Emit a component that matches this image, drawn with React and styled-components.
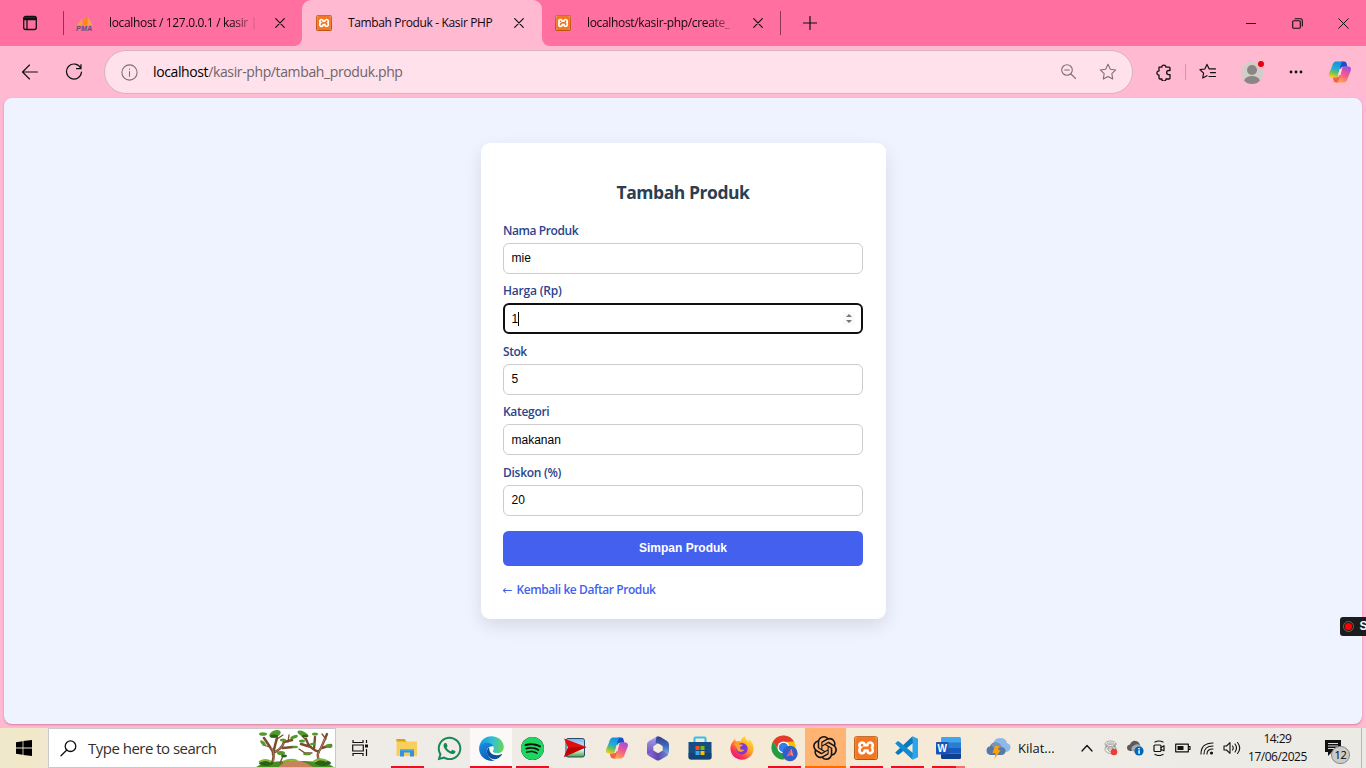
import React from "react";
import styled, { createGlobalStyle, css } from "styled-components";
import { SiOpenai, SiXampp, SiSpotify } from "react-icons/si";
import { FaWhatsapp } from "react-icons/fa";

const ui = `"Open Sans", "Noto Sans", sans-serif`;
const arial = `"Liberation Sans", Arial, sans-serif`;

const Global = createGlobalStyle`
  * { box-sizing: border-box; }
  body { margin: 0; font-family: ${ui}; overflow: hidden; }
  svg { display: block; flex: none; }
`;

const Screen = styled.div`
  position: relative;
  width: 1366px;
  height: 768px;
  display: flex;
  flex-direction: column;
  overflow: hidden;
  background: #ffb9d0;
`;

/* ---------- tab strip ---------- */
const pinkDark = "#ff6fa0";
const pinkLight = "#ffb9d0";

const TabStrip = styled.div`
  display: flex;
  height: 46px;
  flex: none;
`;
const StripLeft = styled.div`
  width: 302px;
  display: flex;
  align-items: center;
  background: ${pinkDark};
  border-bottom-right-radius: 8px;
`;
const StripRight = styled.div`
  flex: 1;
  display: flex;
  align-items: center;
  background: ${pinkDark};
  border-bottom-left-radius: 8px;
`;
const ActiveWrap = styled.div`
  width: 240px;
  background: linear-gradient(${pinkDark} 50%, ${pinkLight} 50%);
`;
const Tab = styled.div`
  display: flex;
  align-items: center;
  width: 238px;
  height: 46px;
  padding-left: ${(p) => p.$pad}px;
  ${(p) =>
    p.$active &&
    css`
      width: 240px;
      background: ${pinkLight};
      border-radius: 9px 9px 0 0;
    `}
`;
const TabTitle = styled.div`
  width: 146px;
  margin: 0 ${(p) => p.$gap || 20}px 0 ${(p) => p.$left || 16}px;
  white-space: nowrap;
  font-size: 12px;
  line-height: 20px;
  letter-spacing: ${(p) => p.$ls}px;
  color: #16060b;
  ${(p) =>
    p.$fade &&
    css`
      mask-image: linear-gradient(90deg, #000 84%, rgba(0, 0, 0, 0.15) 100%);
    `}
`;
const Divider = styled.div`
  width: 1px;
  height: ${(p) => p.$h}px;
  background: ${(p) => p.$color};
  flex: none;
`;
const WorkspaceButton = styled.div`
  width: 63px;
  padding-left: 22px;
`;
const NewTab = styled.div`
  width: 58px;
  display: flex;
  justify-content: center;
`;
const WindowButtons = styled.div`
  margin-left: auto;
  display: flex;
`;
const WindowButton = styled.div`
  width: 46px;
  height: 46px;
  display: flex;
  align-items: center;
  justify-content: center;
`;

/* ---------- toolbar ---------- */
const Toolbar = styled.div`
  display: flex;
  align-items: center;
  height: 52px;
  flex: none;
  background: ${pinkLight};
`;
const ToolButton = styled.div`
  width: ${(p) => p.$w || 44}px;
  padding-left: ${(p) => p.$shift || 0}px;
  display: flex;
  justify-content: center;
  align-items: center;
`;
const AddressBar = styled.div`
  width: 1029px;
  height: 44px;
  margin-left: 16px;
  display: flex;
  align-items: center;
  padding: 0 15px 0 16px;
  border: 1px solid #d8b4c0;
  border-radius: 22px;
  background: #ffe1eb;
`;
const Url = styled.div`
  flex: 1;
  margin-left: 15px;
  font-size: 14px;
  line-height: 20px;
  letter-spacing: -0.38px;
  color: #6f6468;
  b { font-weight: 400; color: #000; }
`;
const AddressIcons = styled.div`
  display: flex;
  gap: 22px;
`;

/* ---------- page ---------- */
const Page = styled.main`
  height: 626px;
  flex: none;
  margin: 0 4px 4px;
  padding-top: 45px;
  border-radius: 8px;
  background: #eff3ff;
  box-shadow: 0 1px 2px rgba(150, 60, 100, 0.45);
`;
const Card = styled.section`
  width: 405px;
  height: 476px;
  margin: 0 auto;
  padding: 0 23px 0 22px;
  border-radius: 9px;
  background: #fff;
  box-shadow: 0 7px 18px rgba(0, 0, 0, 0.1);
`;
const Title = styled.h2`
  margin: 0;
  padding: 36px 0 0 1px;
  height: 78.6px;
  font-size: 17.5px;
  line-height: 26px;
  letter-spacing: -0.45px;
  font-weight: 700;
  text-align: center;
  color: #2c3e50;
`;
const Field = styled.div`
  height: 60.5px;
`;
const Label = styled.div`
  height: 21px;
  padding: 0.4px 0 0 0.5px;
  font-size: 12px;
  line-height: 18px;
  letter-spacing: ${(p) => p.$ls}px;
  font-weight: 600;
  color: #2b448c;
`;
const InputBox = styled.div`
  display: flex;
  align-items: center;
  height: 31px;
  padding: 0 ${(p) => (p.$focus ? 6 : 8)}px 0 ${(p) => (p.$focus ? 7 : 8)}px;
  border: ${(p) => (p.$focus ? "2px solid #101010" : "1px solid #ccc")};
  border-radius: 6px;
  background: #fff;
  font-family: ${arial};
  font-size: 12px;
  line-height: 14px;
  color: #000;
`;
const Caret = styled.span`
  width: 1px;
  height: 14px;
  background: #000;
`;
const Spinner = styled.span`
  margin-left: auto;
  width: 12px;
  height: 13px;
  background: #fafafa;
`;
const Submit = styled.div`
  margin-top: 6.5px;
  height: 35px;
  padding-left: 1px;
  border-radius: 5.5px;
  background: #4361ee;
  color: #fff;
  font: 700 12px/34px ${arial};
  text-align: center;
`;
const BackLink = styled.div`
  display: flex;
  margin-top: 14px;
  font-size: 12px;
  line-height: 20px;
  font-weight: 600;
  letter-spacing: -0.42px;
  color: #4361ee;
`;
const Arrow = styled.span`
  width: 14px;
  font-family: "DejaVu Sans", sans-serif;
  font-weight: 400;
  font-size: 12px;
`;
const RecorderBadge = styled.div`
  position: absolute;
  left: 1340px;
  top: 617px;
  width: 26px;
  height: 19px;
  display: flex;
  align-items: center;
  gap: 5.5px;
  padding-left: 3px;
  border-radius: 3px 0 0 3px;
  background: #1c1c1c;
  color: #fff;
  font: 700 12px/19px ${arial};
  overflow: hidden;
`;

/* ---------- taskbar ---------- */
const Taskbar = styled.footer`
  display: flex;
  align-items: stretch;
  height: 40px;
  flex: none;
  background: linear-gradient(90deg, #efe9cc 0, #f2e8c8 30px, #efe9d8 60px, #efebe7 340px, #efebe6 560px, #f5ead7 680px, #f6ead6 950px, #efece5 1050px, #ebeae5 100%);
  > * { flex: none; }
`;
const Start = styled.div`
  width: 48px;
  display: flex;
  align-items: center;
  justify-content: center;
`;
const Search = styled.div`
  width: 288px;
  display: flex;
  align-items: center;
  padding-left: 11px;
  border: 1px solid #c9c9cb;
  background: #fff;
  overflow: hidden;
`;
const SearchText = styled.div`
  width: 128px;
  margin: 0 39px 0 11px;
  font-size: 15px;
  line-height: 20px;
  letter-spacing: -0.51px;
  white-space: nowrap;
  color: #303030;
`;
const TaskView = styled.div`
  width: 50.5px;
  padding-right: 2px;
  display: flex;
  align-items: center;
  justify-content: center;
`;
const AppGroup = styled.div`
  display: flex;
  > * { width: ${(p) => p.$cell}px; }
`;
const AppButton = styled.div`
  display: flex;
  align-items: center;
  justify-content: center;
  background: ${(p) => p.$bg || "transparent"};
  box-shadow: ${(p) => (p.$full ? `inset 0 -2px ${p.$line}` : "none")};
  ${(p) =>
    p.$line &&
    !p.$full &&
    css`
      background: linear-gradient(${p.$line}, ${p.$line}) center bottom / 33px 2px no-repeat;
    `}
  ${(p) =>
    p.$stacked &&
    css`
      background: linear-gradient(90deg, #e81123 0 24px, #f0707a 24px) center bottom / 33px 2px no-repeat;
    `}
`;
const SpotifyDisc = styled.span`
  border-radius: 50%;
  background: #111;
  color: #1ed760;
`;
const Weather = styled.div`
  display: flex;
  align-items: center;
  gap: 7px;
  width: 89px;
  margin-left: 17px;
  font-size: 13px;
  color: #111;
`;
const Tray = styled.div`
  display: flex;
  align-items: center;
  width: 169px;
`;
const TrayIcon = styled.div`
  width: 24.1px;
  display: flex;
  justify-content: center;
`;
const Clock = styled.div`
  width: 66px;
  padding: 2px 0 0 1px;
  text-align: center;
  font-size: 12px;
  line-height: 18px;
  letter-spacing: -0.5px;
  white-space: nowrap;
  color: #111;
`;
const Notice = styled.div`
  position: relative;
  width: 52px;
  padding: 12px 0 0 15px;
  border-right: 1px solid #b9b8b2;
`;
const Count = styled.span`
  position: absolute;
  left: 21px;
  top: 18px;
  width: 19px;
  height: 18px;
  border: 1px solid #888;
  border-radius: 9px;
  background: #cbcbc9;
  font-size: 11px;
  line-height: 16px;
  text-align: center;
  letter-spacing: -0.4px;
`;
const XamppTile = styled.span`
  width: ${(p) => p.$s}px;
  height: ${(p) => p.$s}px;
  padding: 1px;
  border-radius: ${(p) => p.$s / 8}px;
  background: linear-gradient(#c9702f, #b9520f);
  svg { border-radius: ${(p) => p.$s / 9}px; background: #fff; color: #f37623; }
`;

/* ---------- drawings ---------- */
const Line = ({ w = 16, h = w, vb = `0 0 ${w} ${h}`, sw = 1.1, color = "#111", children }) => (
  <svg width={w} height={h} viewBox={vb} fill="none" stroke={color} strokeWidth={sw} strokeLinecap="round" strokeLinejoin="round">
    {children}
  </svg>
);

const Cross = ({ s = 10, sw = 1.2 }) => (
  <Line w={s} sw={sw}>
    <path d={`M.7.7 ${s - 0.7} ${s - 0.7}M${s - 0.7}.7.7 ${s - 0.7}`} />
  </Line>
);

const XamppIcon = ({ s }) => (
  <XamppTile $s={s}><SiXampp size={s - 2} /></XamppTile>
);

const PmaIcon = () => (
  <svg width="18" height="18" viewBox="0 0 18 18">
    <path d="M1 11.500 6.500 4 6 11Z" fill="#f6a13a" />
    <path d="M6.500 11 10 .5 11.500 11Z" fill="#ff8a10" />
    <path d="M11.500 11 12 3 16.500 11Z" fill="#f3a455" />
    <text x="0" y="17" fontFamily="Liberation Sans, sans-serif" fontSize="7" fontWeight="700" fontStyle="italic" fill="#54537e" textLength="16">PMA</text>
  </svg>
);

const CopilotIcon = ({ id }) => (
  <svg width="24" height="24" viewBox="0 0 24 24">
    <defs>
      <linearGradient id={`${id}a`} x1="9" y1="2" x2="4" y2="17" gradientUnits="userSpaceOnUse">
        <stop offset="0" stopColor="#168fe8" />
        <stop offset=".45" stopColor="#24b1c9" />
        <stop offset=".7" stopColor="#70bf5a" />
        <stop offset="1" stopColor="#f4cf18" />
      </linearGradient>
      <linearGradient id={`${id}b`} x1="20" y1="7" x2="13" y2="22" gradientUnits="userSpaceOnUse">
        <stop offset="0" stopColor="#a34fe0" />
        <stop offset=".5" stopColor="#f1588f" />
        <stop offset="1" stopColor="#ffa151" />
      </linearGradient>
    </defs>
    <path d="M13 1.500h3.200c1.300 0 2 .8 2.400 2.100l.8 3.100h-4.200c-1.500 0-2.200.8-2.600 2.200L11 7z" fill="#1a4fc5" />
    <path d="M11 22.500H8c-1.500 0-2.100-.9-2.500-2.200l-.8-3H9c1.500 0 2.200-1 2.600-2.300L13 17z" fill="#f0643f" />
    <path d="M15.500 1.500H8.300C5.700 1.500 4.700 4 4 6.500L1.300 13C.3 15.500 1.300 17.400 3.800 17.400h3.400c1.800 0 2.600-1.200 3-2.700l2.600-9.500c.6-2.100 1.200-3.700 2.700-3.700z" fill={`url(#${id}a)`} />
    <path d="M8.500 22.500h7.200c2.600 0 3.600-2.500 4.300-5l2.600-6.400c1-2.600 0-4.500-2.500-4.500h-3.400c-1.800 0-2.500 1.300-3 2.800l-2.600 9.400c-.6 2.100-1.200 3.700-2.600 3.700z" fill={`url(#${id}b)`} />
    <path d="M11.700 9.200h2.300l-1.600 5.800h-2.300z" fill="#ffd9dc" />
  </svg>
);

const StarPath = "M8 1.200 10.100 5.500 14.900 6.200 11.400 9.500 12.200 14.300 8 12 3.800 14.300 4.600 9.500 1.100 6.200 5.900 5.500Z";

const Trees = () => (
  <svg width="80" height="39" viewBox="0 0 80 39">
    <path d="M0 39C6 33 22 32 40 32S74 33 80 39Z" fill="#4b8b22" />
    <path d="M22 39 30 33Q42 29 51 34L60 39Z" fill="#c8825e" />
    <g fill="none" stroke="#7b4d30" strokeLinecap="round">
      <path d="M17 34Q21 25 15 18L9 9M18 25Q20 16 22 9M18 24Q27 20 29 13L37 11M28 19 38 18" strokeWidth="2.600" />
      <path d="M65 33Q60 26 66 19L72 5M64 23Q54 20 51 10M56 18 46 15M67 19 76 16M59 20 60 8" strokeWidth="2.400" />
      <path d="M15 18 8 16M22 10 28 6M33 13 34 6M25 34 28 27 25 23M44 20 50 24 57 24M71 10 67 5M51 11 47 7" strokeWidth="1.300" />
    </g>
    <path d="M18 33Q21 25 16 18M64 32Q61 26 66 19L70 9M20 23Q27 19 29 14" fill="none" stroke="#b98262" strokeWidth=".9" />
    <g fill="#52992a">
      <ellipse cx="20" cy="5" rx="6" ry="3.500" transform="rotate(-25 20 5)" />
      <ellipse cx="8" cy="5" rx="4" ry="1.800" /><ellipse cx="8" cy="14" rx="3.500" ry="1.600" transform="rotate(45 8 14)" />
      <ellipse cx="28" cy="11" rx="3" ry="1.500" /><ellipse cx="39" cy="8" rx="4" ry="1.600" transform="rotate(-20 39 8)" />
      <ellipse cx="40" cy="18" rx="3" ry="1.200" /><ellipse cx="48" cy="5" rx="6" ry="2.500" transform="rotate(25 48 5)" />
      <ellipse cx="47" cy="12" rx="3" ry="1.500" /><ellipse cx="60" cy="5" rx="3" ry="1.500" />
      <ellipse cx="58" cy="15" rx="3" ry="1.300" /><ellipse cx="74" cy="17" rx="3.500" ry="2" />
      <ellipse cx="26" cy="24" rx="4" ry="2" /><ellipse cx="52" cy="25" rx="4" ry="1.300" />
    </g>
    <g fill="#276418">
      <ellipse cx="19" cy="7" rx="4" ry="1.600" /><ellipse cx="11" cy="34" rx="7" ry="3" />
      <ellipse cx="68" cy="34" rx="8" ry="3" /><ellipse cx="50" cy="7" rx="3" ry="1.300" />
      <ellipse cx="29" cy="27" rx="3" ry="1.400" />
    </g>
    <path d="M4 33q7-4 12 0M58 33q6-5 14-1M28 33q8-4 14-1" fill="none" stroke="#86b732" strokeWidth="2" />
  </svg>
);

const Explorer = () => (
  <svg width="22" height="20" viewBox="0 0 22 20">
    <path d="M.5 1h8l2 2.500h10.500V18H.5z" fill="#f9cf5c" />
    <path d="M.5 1h8l2 2.500H.5z" fill="#dca016" />
    <path d="M4 11h14v7.500h-4v-4H8v4H4z" fill="#3592d8" />
    <path d="M4 11h14v1.500H4z" fill="#58b3ee" />
  </svg>
);

const Edge = () => (
  <svg width="25" height="25" viewBox="0 0 24 24">
    <defs>
      <linearGradient id="edgeTop" x1="2" y1="6" x2="23" y2="9" gradientUnits="userSpaceOnUse">
        <stop offset="0" stopColor="#1b9de2" /><stop offset=".55" stopColor="#35c1d2" /><stop offset="1" stopColor="#64d659" />
      </linearGradient>
      <linearGradient id="edgeLow" x1="2" y1="7" x2="10" y2="23" gradientUnits="userSpaceOnUse">
        <stop offset="0" stopColor="#188bdc" /><stop offset="1" stopColor="#0c5eb8" />
      </linearGradient>
    </defs>
    <path d="M.2 10.500C1 4.500 6 .2 12 .2c7 0 11.800 5 11.800 10.300 0 3.600-2.800 6-6 6-3 0-4.600-1-4.600-1.900 0-.6 1-1.100 1-2.900C14.200 9 11.500 7 8 7 4.500 7 1.500 8.400.2 10.500Z" fill="url(#edgeTop)" />
    <path d="M.1 12C.2 8.500 3.600 6.500 7.500 6.500c3.600 0 5.600 1.700 6.400 3.400-5-1-7.500 3-6 7 1.200 3.600 4 6.200 7 6.600-1 .3-2 .4-3 .4C5 23.900 0 18 .1 12Z" fill="url(#edgeLow)" />
    <path d="M9.500 10.700c-2.500 2-2.500 6.100 0 9 3 3.500 8.500 4 12.500-1.700.4-.6-.1-.9-.6-.6-5.500 2.600-10.500.2-11.300-3.400-.2-1.400-.2-2.300-.6-3.300Z" fill="#0d4f9a" />
  </svg>
);

const RedArrow = () => (
  <svg width="24" height="22" viewBox="0 0 24 22">
    <defs><linearGradient id="pane" x1="0" y1="0" x2="0" y2="1"><stop offset="0" stopColor="#7db6ed" /><stop offset=".6" stopColor="#eaf3f5" /><stop offset="1" stopColor="#3ea63a" /></linearGradient></defs>
    <rect x="3" y="1.500" width="18.500" height="18.500" rx="2" fill="url(#pane)" stroke="#274a6b" />
    <path d="M1 1.500 23.500 10 1 20 5 10.500Z" fill="#e00f0b" />
    <path d="M5 10.500 23.500 10 1 20Z" fill="#bd0604" />
  </svg>
);

const M365 = () => (
  <svg width="24" height="25" viewBox="0 0 24 25">
    <defs>
      <linearGradient id="mA" x1="0" y1="0" x2="0" y2="1"><stop offset="0" stopColor="#a9a4ee" /><stop offset="1" stopColor="#6a4cb8" /></linearGradient>
      <linearGradient id="mB" x1="0" y1="0" x2="0" y2="1"><stop offset="0" stopColor="#34408f" /><stop offset=".5" stopColor="#3f68b8" /><stop offset="1" stopColor="#7ab4f2" /></linearGradient>
      <linearGradient id="mC" x1="0" y1="0" x2="1" y2="0"><stop offset="0" stopColor="#9a66dc" /><stop offset=".5" stopColor="#5a4bab" /><stop offset="1" stopColor="#7583dc" /></linearGradient>
    </defs>
    <path d="M13.500.5Q11.500 0 10 1L3 5Q1 6.200 1 8.500v8q0 1.500 1 2.500L10 17 7.300 14.500V10.300L14 6Z" fill="url(#mA)" />
    <path d="M10.500.8Q12.500 0 14.500 1L21 5Q23 6.200 23 8.500v7q0 2-1.500 3.300L16.700 15V10.300L13.500 8 9.500 6.800Z" fill="url(#mB)" />
    <path d="M1.600 18.200 7.300 14.500 12 17.200 16.700 14.500 22 18.300Q22 19.500 21 20l-7 4q-2 1-4 0l-7-4Q2 19.400 1.600 18.200Z" fill="url(#mC)" />
  </svg>
);

const Store = () => (
  <svg width="24" height="24" viewBox="0 0 24 24">
    <path d="M6.500 7V2.500q0-1 1-1h9q1 0 1 1V7" fill="none" stroke="#35bdf0" strokeWidth="2" />
    <path d="M.5 6h23v15q0 2.500-2.500 2.500H3Q.5 23.500.5 21Z" fill="#164d82" />
    <path d="M.5 17v4q0 2.500 2.500 2.500h18q2.500 0 2.500-2.500v-4Z" fill="#143f72" opacity=".7" />
    <path d="M7.500 10h4v4h-4z" fill="#f25022" /><path d="M12.500 10h4v4h-4z" fill="#7fba00" />
    <path d="M7.500 15h4v4h-4z" fill="#33aaf0" /><path d="M12.500 15h4v4h-4z" fill="#ffb900" />
  </svg>
);

const Firefox = () => (
  <svg width="24" height="24" viewBox="0 0 24 24">
    <defs>
      <linearGradient id="ffA" x1="20" y1="3" x2="5" y2="22" gradientUnits="userSpaceOnUse"><stop offset="0" stopColor="#ffe22f" /><stop offset=".45" stopColor="#ff982e" /><stop offset=".75" stopColor="#ff3c4b" /><stop offset="1" stopColor="#e71587" /></linearGradient>
    </defs>
    <path d="M3 5.500C4 4.600 4.200 3 4.500 2.500 4.800 4 5.800 5 7 5.500 8.500 5 10 5 11 5.400 11 3 13.500.8 15 .3c0 2.500 2 3.700 3.500 5.200.5-.7.300-1.700.1-2.400C22 5 23.600 9 23.600 12.500 23.600 19 18.400 23.700 12 23.700S.4 18.700.4 12.500C.4 10 1.400 7.500 3 5.500Z" fill="url(#ffA)" />
    <circle cx="12" cy="12.700" r="5.700" fill="#8139d5" />
    <path d="M3.500 8C6 6.300 8.500 7.500 10 8.600l3 .2c-.4 1.500-2.800 1.300-3 2.700 0 2 2.500 3 4.500 1.900-1.500 3.500-6.500 3-7.500.1-1-2.800-1-4.300-3.500-5.500Z" fill="#ffa32c" />
  </svg>
);

const Chrome = () => (
  <svg width="27" height="27" viewBox="0 0 27 27">
    <circle cx="12.500" cy="12.500" r="12" fill="#fbbc05" />
    <path d="M2 6.600A12 12 0 0 1 23 6.600L12.500 7 7.500 15Z" fill="#e23b2e" />
    <path d="M2 6.600A12 12 0 0 0 12.500 24.500L17 16H8Z" fill="#249b48" />
    <circle cx="12.500" cy="12.500" r="6" fill="#fff" /><circle cx="12.500" cy="12.500" r="4.700" fill="#327ee8" />
    <circle cx="19" cy="18.500" r="7.700" fill="#315fc9" />
    <path d="M20.500 13.500 22.500 21.500 19.500 20 15.500 21.500Z" fill="#ff8178" /><path d="M20.500 13.500 19.500 20 15.500 21.500Z" fill="#d75a70" />
  </svg>
);

const VsCode = () => (
  <svg width="24" height="24" viewBox="0 0 24 24">
    <path d="M17.500.3 23 2.800v18.400l-5.500 2.500Z" fill="#28a5ed" />
    <path d="M17.500.3 1.300 15.500.2 16.500 2.500 18.700 4 18.500 18 7Z" fill="#0978bd" />
    <path d="M17.500 23.700 1.300 8.500.2 7.500 2.500 5.300 4 5.500 18 17Z" fill="#128bd2" />
  </svg>
);

const Word = () => (
  <svg width="25" height="22" viewBox="0 0 25 22">
    <path d="M6 0h17.500Q25 0 25 1.500V6H5V1.500Q5 0 6 0Z" fill="#41a5ee" />
    <path d="M5 5.500h20v5.500H5z" fill="#2b7cd3" /><path d="M5 11h20v5.500H5z" fill="#185abd" />
    <path d="M5 16.500h20v4q0 1.500-1.500 1.500h-17Q5 22 5 20.500Z" fill="#103f91" />
    <rect x="0" y="5" width="12.500" height="12.500" rx="1" fill="#1955b5" />
    <text x="6.200" y="14.800" fontSize="10" fontWeight="700" fontFamily="Liberation Sans, sans-serif" fill="#fff" textAnchor="middle">W</text>
  </svg>
);

const WeatherIcon = () => (
  <svg width="25" height="23" viewBox="0 0 25 23">
    <path d="M7 13Q6 1 14 1q6 0 7 5 3.500 1 3.500 4 0 4-4 5Z" fill="#8fb8e9" />
    <path d="M4 18Q.5 17 .5 13.500 .5 10 4 9.300 5.500 5 10 5.500q4 .5 5.500 4.500 4 .5 4 4 0 3.500-3.500 4Z" fill="#557aa8" />
    <path d="M5 8q2-3 6-2.300 4 .8 4.500 4.300Q9 14 5 8Z" fill="#7695bb" />
    <path d="M9 9h4l-1 4h2.500L8.500 22l1-6H6.500Z" fill="#ff9f0b" />
  </svg>
);

const fields = [
  { label: "Nama Produk", value: "mie", ls: -0.42 },
  { label: "Harga (Rp)", value: "1", ls: -0.2, focus: true },
  { label: "Stok", value: "5", ls: -0.45 },
  { label: "Kategori", value: "makanan", ls: -0.3 },
  { label: "Diskon (%)", value: "20", ls: -0.28 },
];

const red = "#e81123";

export default function App() {
  return (
    <Screen>
      <Global />
      <TabStrip>
        <StripLeft>
          <WorkspaceButton>
            <Line w={16} sw={1.3}>
              <rect x="1.700" y="1.500" width="12.600" height="13" rx="2" />
              <path d="M2 3h12v1.500H2z" fill="#111" /><path d="M5 5v9" />
            </Line>
          </WorkspaceButton>
          <Divider $h={24} $color="#8d3557" />
          <Tab $pad={12}>
            <PmaIcon />
            <TabTitle $fade $left={15} $ls={-0.34}>localhost / 127.0.0.1 / kasir |</TabTitle>
            <Cross />
          </Tab>
        </StripLeft>
        <ActiveWrap>
          <Tab $active $pad={14}>
            <XamppIcon s={16} />
            <TabTitle $ls={-0.36}>Tambah Produk - Kasir PHP</TabTitle>
            <Cross />
          </Tab>
        </ActiveWrap>
        <StripRight>
          <Tab $pad={13}>
            <XamppIcon s={16} />
            <TabTitle $fade $ls={-0.34}>localhost/kasir-php/create_</TabTitle>
            <Cross />
          </Tab>
          <Divider $h={24} $color="#8d3557" />
          <NewTab><Line w={14} sw={1.2}><path d="M7 .5v13M.5 7h13" /></Line></NewTab>
          <WindowButtons>
            <WindowButton><Line w={10} h={11} sw={1.1}><path d="M.5 5.500h9" /></Line></WindowButton>
            <WindowButton><Line w={11} sw={1.1}><rect x=".7" y="2.700" width="7.600" height="7.600" rx="1" /><path d="M3 .7h5.500a1.800 1.800 0 0 1 1.800 1.800V8" /></Line></WindowButton>
            <WindowButton><Cross s={11} sw={1} /></WindowButton>
          </WindowButtons>
        </StripRight>
      </TabStrip>

      <Toolbar>
        <ToolButton $w={60}><Line w={18} sw={1.1}><path d="M16.500 9H1.500M8.500 2 1.500 9l7 7" /></Line></ToolButton>
        <ToolButton $w={28}><Line w={18} sw={1.2}><path d="M15.800 5.300A7.500 7.500 0 1 0 16.500 9M16 1.500v4.200h-4.500" /></Line></ToolButton>
        <AddressBar>
          <Line w={17} sw={1.1} color="#7d6f74"><circle cx="8.500" cy="8.500" r="7.600" /><path d="M8.500 7.500v4.800M8.500 5v.2" /></Line>
          <Url><b>localhost</b>/kasir-php/tambah_produk.php</Url>
          <AddressIcons>
            <Line w={17} sw={1.1} color="#7d6f74"><circle cx="7" cy="7" r="5.300" /><path d="m11 11 4.500 4.500M4.700 7h4.600" /></Line>
            <Line w={18} vb="0 0 16 16" sw={0.95} color="#7d6f74"><path d={StarPath} /></Line>
          </AddressIcons>
        </AddressBar>
        <ToolButton $w={52} $shift={8}>
          <Line w={17} sw={1.3}><path d="M4 3.200h2.800a2.100 2.100 0 0 1 4.200 0H14a1 1 0 0 1 1 1v2.300h-1.300a2 2 0 0 0 0 4.100H15V14a1 1 0 0 1-1 1h-3a2.100 2.100 0 0 1-4.200 0H5a1 1 0 0 1-1-1v-2.900a2.100 2.100 0 1 1 0-4.200Z" /></Line>
        </ToolButton>
        <Divider $h={16} $color="#d592aa" />
        <ToolButton $w={44}>
          <Line w={18} sw={1.2}><path d="M8 1.500 5.800 6 1 6.700l3.600 3.400L3.700 15 8 12.700M8 1.500l2.200 4.400h6.300M11.500 9.700h5M10 13.500h6.500" /></Line>
        </ToolButton>
        <ToolButton $w={44}>
          <svg width="24" height="26" viewBox="0 0 24 26">
            <circle cx="12" cy="14" r="11" fill="#d0cdca" /><circle cx="12" cy="11" r="5" fill="#8b8683" />
            <path d="M4 21.500q2-4.500 8-4.500t8 4.500Q17 25 12 25t-8-3.500Z" fill="#8b8683" />
            <circle cx="21" cy="5" r="3.600" fill="#e30010" stroke="#ffdbe6" strokeWidth=".8" />
          </svg>
        </ToolButton>
        <ToolButton $w={44}><svg width="14" height="4"><g fill="#111"><circle cx="2" cy="2" r="1.400" /><circle cx="7" cy="2" r="1.400" /><circle cx="12" cy="2" r="1.400" /></g></svg></ToolButton>
        <ToolButton $w={44}><CopilotIcon id="bar" /></ToolButton>
      </Toolbar>

      <Page>
        <Card>
          <Title>Tambah Produk</Title>
          {fields.map((f) => (
            <Field key={f.label}>
              <Label $ls={f.ls}>{f.label}</Label>
              <InputBox $focus={f.focus}>
                {f.value}
                {f.focus && <Caret />}
                {f.focus && <Spinner><svg width="12" height="13" viewBox="0 0 12 13" fill="#777"><path d="M3 5 6 2 9 5ZM3 8l3 3 3-3Z" /></svg></Spinner>}
              </InputBox>
            </Field>
          ))}
          <Submit>Simpan Produk</Submit>
          <BackLink><Arrow>←</Arrow>Kembali ke Daftar Produk</BackLink>
        </Card>
      </Page>

      <Taskbar>
        <Start><svg width="16" height="16" viewBox="0 0 16 16"><path d="M0 2.200 6.600 1.200v6.300H0ZM7.400 1.100 16 0v7.500H7.400ZM0 8.400h6.600v6.400L0 13.800ZM7.400 8.400H16V16l-8.600-1.100Z" /></svg></Start>
        <Search>
          <Line w={17} sw={1.3}><circle cx="10.500" cy="6.200" r="5.300" /><path d="M6.800 10 1 15.800" /></Line>
          <SearchText>Type here to search</SearchText>
          <Trees />
        </Search>
        <TaskView>
          <svg width="17" height="16" viewBox="0 0 17 16" fill="none" stroke="#111" strokeWidth="1.200">
            <path d="M1 0v2.500h10V0M1 16v-2.500h10V16M.7 5h10.600v6H.7zM14.500 0v3M14.500 9v7" /><path d="M13 4.500h3v3h-3z" fill="#111" stroke="none" />
          </svg>
        </TaskView>
        <AppGroup $cell={41.85}>
          <AppButton $line={red}><Explorer /></AppButton>
          <AppButton><FaWhatsapp size={27} color="#198754" /></AppButton>
          <AppButton $line={red} $full $bg="#faf9f8"><Edge /></AppButton>
          <AppButton $line={red}><SpotifyDisc><SiSpotify size={23} /></SpotifyDisc></AppButton>
          <AppButton><RedArrow /></AppButton>
          <AppButton><CopilotIcon id="task" /></AppButton>
          <AppButton><M365 /></AppButton>
          <AppButton><Store /></AppButton>
          <AppButton><Firefox /></AppButton>
          <AppButton $line={red}><Chrome /></AppButton>
        </AppGroup>
        <AppGroup $cell={41}>
          <AppButton $line="#ff6a00" $full $bg="#ffb474"><SiOpenai size={24} color="#161616" /></AppButton>
          <AppButton $line={red}><XamppIcon s={24} /></AppButton>
          <AppButton $line={red}><VsCode /></AppButton>
          <AppButton $stacked><Word /></AppButton>
        </AppGroup>
        <Weather><WeatherIcon />Kilat...</Weather>
        <Tray>
          <TrayIcon><Line w={12} sw={1.3}><path d="m1 9 5-5.500L11 9" /></Line></TrayIcon>
          <TrayIcon>
            <Line w={16} sw={0.7} color="#8b8b8b"><ellipse cx="7.500" cy="4" rx="5.500" ry="3" /><ellipse cx="7.500" cy="6" rx="4.500" ry="3" /><ellipse cx="7.500" cy="9" rx="5.500" ry="4.500" /><circle cx="7.500" cy="9" r="2.500" /><circle cx="11" cy="12" r="3.300" fill="#f03b35" stroke="none" /></Line>
          </TrayIcon>
          <TrayIcon>
            <svg width="17" height="16" viewBox="0 0 17 16"><path d="M3 11Q0 10.500 0 7.500 0 5 3 4.500 5 0 9 1q3 .5 4 4L7 11Z" fill="#5b5b5d" /><path d="M5 11q-2-4 2-5.500Q11 3 14 6l2 3-6 3Z" fill="#aaa" /><circle cx="12" cy="11" r="4.600" fill="#0067c0" /><path d="M11.300 10.300h1.500v3.500h-1.500zM11.300 8h1.500v1.400h-1.500z" fill="#fff" /></svg>
          </TrayIcon>
          <TrayIcon><Line w={14} h={16} sw={1.2}><rect x="2" y="5" width="7" height="6.500" rx="1" /><path d="m9 7.500 3-1.800v5L9 9.500M3 2q4-2 8 0M3 14.500q4 2 8 0" /></Line></TrayIcon>
          <TrayIcon><Line w={16} h={10} sw={1.2}><path d="M.7 1.200h12.600v7.600H.7zM13.500 3.500h1.500v3h-1.500" /><path d="M2.500 3h6v4h-6z" fill="#111" stroke="none" /></Line></TrayIcon>
          <TrayIcon><Line w={14} h={14} sw={1.1}><path d="M1 13Q1 2 13 2M4 13Q4 5 13 5M7 13Q7 8 13 8" /><circle cx="11.500" cy="12" r="1" fill="#111" /></Line></TrayIcon>
          <TrayIcon><Line w={18} h={14} sw={1.1}><path d="M1 5h2.500L7 1.700v10.600L3.500 9H1ZM9.500 5q1.500 2 0 4M12 3q3 4 0 8M14.500 1.500q4.500 5.500 0 11" /></Line></TrayIcon>
        </Tray>
        <Clock>14:29<br />17/06/2025</Clock>
        <Notice>
          <svg width="16" height="16" viewBox="0 0 16 16"><path d="M0 0h16v12H7l-4 4v-4H0Z" fill="#111" /><path d="M3 3.500h10M3 6h10M3 8.500h7" stroke="#ddd" /></svg>
          <Count>12</Count>
        </Notice>
      </Taskbar>

      <RecorderBadge>
        <svg width="11" height="11" viewBox="0 0 11 11"><circle cx="5.500" cy="5.500" r="5" fill="none" stroke="#c85555" strokeWidth=".8" /><circle cx="5.500" cy="5.500" r="3.600" fill="#f00" /></svg>
        S
      </RecorderBadge>
    </Screen>
  );
}
